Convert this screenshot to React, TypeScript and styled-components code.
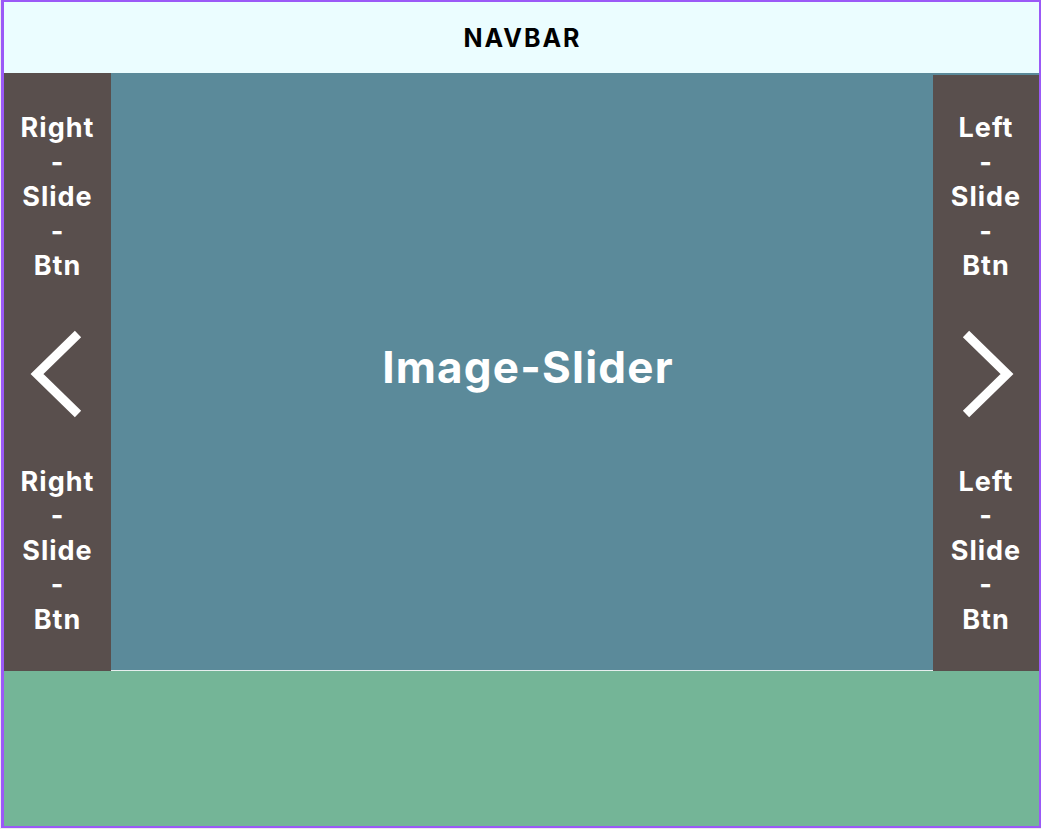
import React from "react";
import styled, { createGlobalStyle } from "styled-components";

const Global = createGlobalStyle`
  html, body { margin: 0; padding: 0; background: #ececec; }
  body { font-family: Inter, "Noto Sans", sans-serif; }
`;

const Frame = styled.div`
  box-sizing: border-box;
  width: 1040px;
  height: 828px;
  margin-left: 1px;
  border: 2px solid #9b59f7;
  border-left-width: 3px;
  display: flex;
  flex-direction: column;
  overflow: hidden;
`;

const Navbar = styled.header`
  height: 71px;
  flex: 0 0 71px;
  background: #ebfdff;
  display: flex;
  align-items: center;
  justify-content: center;
  font-weight: 700;
  font-size: 25px;
  color: #000;
  letter-spacing: 2px;
  padding-left: 2px;
`;

const SliderRow = styled.section`
  display: grid;
  grid-template-columns: 107px 1fr 106px;
  height: 598px;
  flex: 0 0 598px;
  background: #5b8a9a;
`;

const SidePanel = styled.div<{ $offset?: number }>`
  background: #594f4d;
  margin-top: ${(p) => p.$offset ?? 0}px;
  display: flex;
  flex-direction: column;
  align-items: center;
  padding-top: ${(p) => 38 - (p.$offset ?? 0)}px;
  box-sizing: border-box;
  color: #fff;
`;

const Label = styled.div`
  display: flex;
  flex-direction: column;
  align-items: center;
  font-weight: 700;
  font-size: 27px;
  line-height: 34.5px;
  letter-spacing: 1px;
`;

const Chevron = styled.svg`
  margin: 46px 0 47px;
  width: 60px;
  height: 88px;
  display: block;
`;

const Center = styled.div`
  display: flex;
  align-items: center;
  justify-content: center;
  border-bottom: 1px solid #e6eeee;
  color: #fff;
  font-weight: 700;
  font-size: 44px;
  letter-spacing: 1.2px;
  padding-left: 12px;
  padding-bottom: 10px;
  box-sizing: border-box;
`;

const Footer = styled.footer`
  flex: 1;
  background: #74b597;
`;

const SideLabel = ({ word }: { word: string }) => (
  <Label>
    <span>{word}</span>
    <span>-</span>
    <span>Slide</span>
    <span>-</span>
    <span>Btn</span>
  </Label>
);

export default function App() {
  return (
    <>
      <Global />
      <Frame>
        <Navbar>NAVBAR</Navbar>
        <SliderRow>
          <SidePanel>
            <SideLabel word="Right" />
            <Chevron viewBox="0 0 60 88">
              <polyline points="50,4 9,44 50,84" fill="none" stroke="#fff" strokeWidth="9" strokeLinecap="butt" />
            </Chevron>
            <SideLabel word="Right" />
          </SidePanel>
          <Center>Image-Slider</Center>
          <SidePanel $offset={2}>
            <SideLabel word="Left" />
            <Chevron viewBox="0 0 60 88">
              <polyline points="10,4 51,44 10,84" fill="none" stroke="#fff" strokeWidth="9" strokeLinecap="butt" />
            </Chevron>
            <SideLabel word="Left" />
          </SidePanel>
        </SliderRow>
        <Footer />
      </Frame>
    </>
  );
}
